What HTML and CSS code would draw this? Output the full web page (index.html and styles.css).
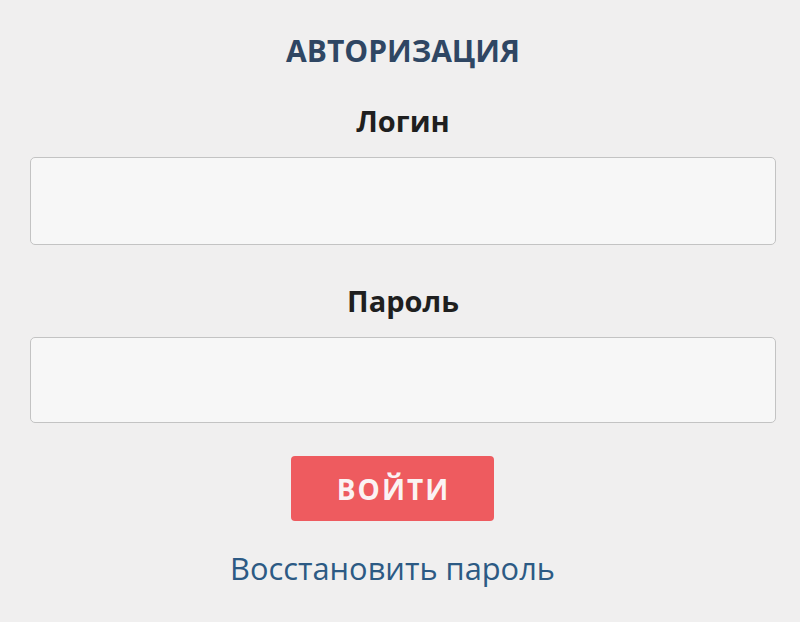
FILE: index.html
```html
<!DOCTYPE html>
<html lang="ru">
<head>
<meta charset="utf-8">
<link rel="stylesheet" href="styles.css">
</head>
<body>
<div class="auth">
  <h1 class="title">АВТОРИЗАЦИЯ</h1>
  <label class="label">Логин</label>
  <div class="input input-login"></div>
  <label class="label label-pass">Пароль</label>
  <div class="input input-pass"></div>
  <button class="btn">ВОЙТИ</button>
  <a class="link">Восстановить пароль</a>
</div>
</body>
</html>
```
FILE: styles.css
```css
html, body {
  margin: 0;
  padding: 0;
  background: #f0efef;
}
.auth {
  width: 800px;
  height: 622px;
  box-sizing: border-box;
  padding: 31px 24px 0 30px;
  display: flex;
  flex-direction: column;
  align-items: center;
  font-family: "Open Sans", sans-serif;
}
.title {
  margin: 0;
  font-size: 30px;
  font-weight: 700;
  line-height: 40px;
  color: #2f4663;
}
.label {
  margin-top: 31px;
  font-size: 29px;
  font-weight: 700;
  line-height: 38px;
  color: #1f1f1f;
}
.label-pass {
  margin-top: 37px;
}
.input {
  align-self: stretch;
  margin-top: 17px;
  background: #f7f7f7;
  border: 1px solid #c3c3c3;
  border-radius: 5px;
}
.input-login {
  height: 86px;
}
.input-pass {
  height: 84px;
}
.btn {
  margin-top: 33px;
  margin-right: 21px;
  width: 203px;
  height: 65px;
  border: 0;
  border-radius: 4px;
  background: #ee5b5f;
  color: #fbf3f3;
  font-family: "Open Sans", sans-serif;
  font-size: 28px;
  font-weight: 700;
  letter-spacing: 2px;
  text-indent: 2px;
}
.link {
  margin-top: 26px;
  margin-right: 21px;
  font-size: 30.8px;
  line-height: 42px;
  color: #2c5a84;
}
```
